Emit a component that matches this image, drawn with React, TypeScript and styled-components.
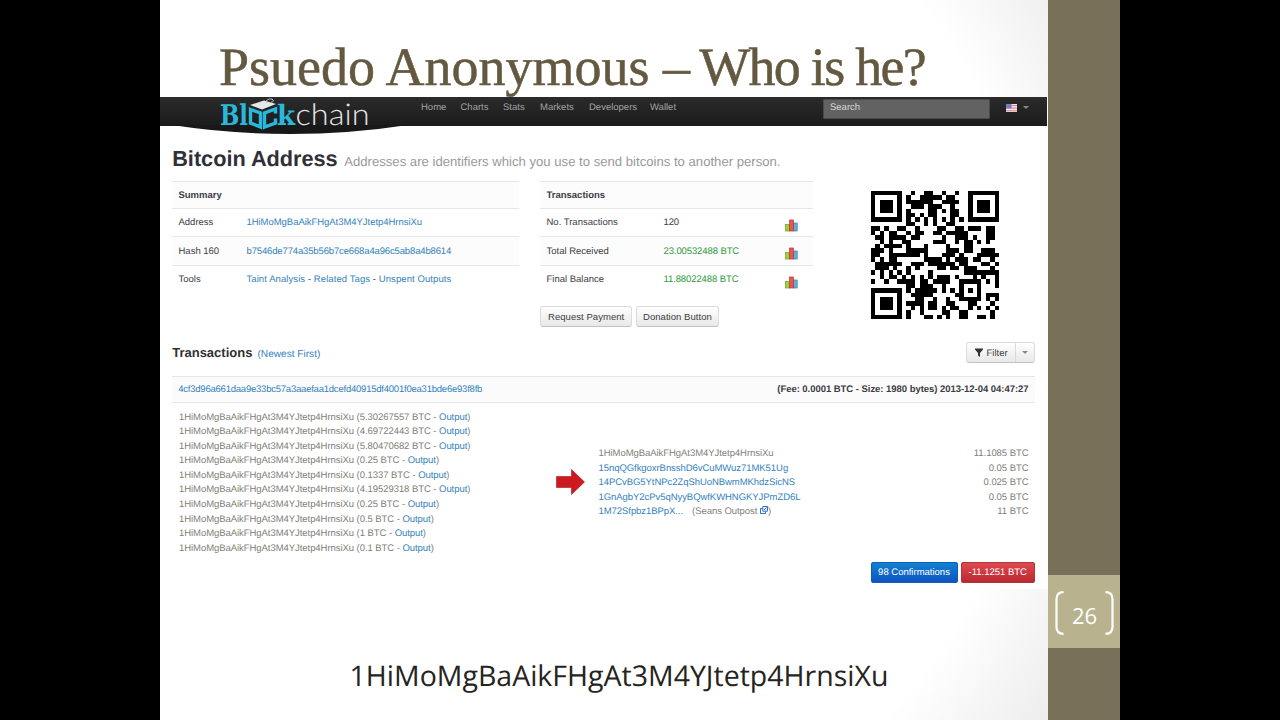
import React from "react";
import styled, { createGlobalStyle, css } from "styled-components";

const GlobalStyle = createGlobalStyle`
  * { box-sizing: border-box; }
  html, body { margin: 0; padding: 0; background: #000; }
  body { overflow: hidden; text-rendering: geometricPrecision; }
`;

const LINK = "#3582bd";
const ADDRESS = "1HiMoMgBaAikFHgAt3M4YJtetp4HrnsiXu";

/* ---------- QR code (version 3, level L, 29 x 29 modules) ---------- */

const QR_SIZE = 29;
const QR_DATA = 55;
const QR_MASK = 7;

function gfMul(x: number, y: number): number {
  let z = 0;
  for (let i = 7; i >= 0; i--) {
    z = (z << 1) ^ ((z >>> 7) * 0x11d);
    z ^= ((y >>> i) & 1) * x;
  }
  return z & 255;
}

function reedSolomon(data: number[], degree: number): number[] {
  const gen = new Array(degree).fill(0);
  gen[degree - 1] = 1;
  let root = 1;
  for (let i = 0; i < degree; i++) {
    for (let j = 0; j < degree; j++) {
      gen[j] = gfMul(gen[j], root);
      if (j + 1 < degree) gen[j] ^= gen[j + 1];
    }
    root = gfMul(root, 2);
  }
  const rem = new Array(degree).fill(0);
  for (const b of data) {
    const f = b ^ rem.shift();
    rem.push(0);
    gen.forEach((c, i) => (rem[i] ^= gfMul(c, f)));
  }
  return rem;
}

const isMasked = (x: number, y: number) => (((x + y) % 2) + ((x * y) % 3)) % 2 === 0;

function qrModules(text: string): boolean[][] {
  const bits: number[] = [];
  const put = (v: number, n: number) => {
    for (let i = n - 1; i >= 0; i--) bits.push((v >>> i) & 1);
  };
  put(4, 4);
  put(text.length, 8);
  for (const ch of text) put(ch.charCodeAt(0), 8);
  put(0, 4);
  const data: number[] = [];
  for (let i = 0; i < bits.length; i += 8) data.push(parseInt(bits.slice(i, i + 8).join(""), 2));
  for (let pad = 0xec; data.length < QR_DATA; pad ^= 0xec ^ 0x11) data.push(pad);
  const all = data.concat(reedSolomon(data, 70 - QR_DATA));

  const m = Array.from({ length: QR_SIZE }, () => new Array(QR_SIZE).fill(false));
  const fixed = Array.from({ length: QR_SIZE }, () => new Array(QR_SIZE).fill(false));
  const set = (x: number, y: number, v: boolean) => {
    if (x < 0 || y < 0 || x >= QR_SIZE || y >= QR_SIZE) return;
    m[y][x] = v;
    fixed[y][x] = true;
  };
  for (let i = 0; i < QR_SIZE; i++) {
    set(6, i, i % 2 === 0);
    set(i, 6, i % 2 === 0);
  }
  for (const [cx, cy] of [[3, 3], [QR_SIZE - 4, 3], [3, QR_SIZE - 4]]) {
    for (let dy = -4; dy <= 4; dy++)
      for (let dx = -4; dx <= 4; dx++) {
        const d = Math.max(Math.abs(dx), Math.abs(dy));
        set(cx + dx, cy + dy, d !== 2 && d !== 4);
      }
  }
  for (let dy = -2; dy <= 2; dy++)
    for (let dx = -2; dx <= 2; dx++) set(22 + dx, 22 + dy, Math.max(Math.abs(dx), Math.abs(dy)) !== 1);

  const info = (1 << 3) | QR_MASK;
  let rem = info;
  for (let i = 0; i < 10; i++) rem = (rem << 1) ^ ((rem >>> 9) * 0x537);
  const fmt = ((info << 10) | rem) ^ 0x5412;
  const f = (i: number) => ((fmt >>> i) & 1) === 1;
  for (let i = 0; i <= 5; i++) set(8, i, f(i));
  set(8, 7, f(6));
  set(8, 8, f(7));
  set(7, 8, f(8));
  for (let i = 9; i < 15; i++) set(14 - i, 8, f(i));
  for (let i = 0; i < 8; i++) set(QR_SIZE - 1 - i, 8, f(i));
  for (let i = 8; i < 15; i++) set(8, QR_SIZE - 15 + i, f(i));
  set(8, QR_SIZE - 8, true);

  let k = 0;
  for (let right = QR_SIZE - 1; right >= 1; right -= 2) {
    if (right === 6) right = 5;
    for (let v = 0; v < QR_SIZE; v++)
      for (let j = 0; j < 2; j++) {
        const x = right - j;
        const y = ((right + 1) & 2) === 0 ? QR_SIZE - 1 - v : v;
        if (fixed[y][x]) continue;
        const bit = k < all.length * 8 ? ((all[k >>> 3] >>> (7 - (k & 7))) & 1) === 1 : false;
        k++;
        m[y][x] = bit !== isMasked(x, y);
      }
  }
  return m;
}

const QrSvg = styled.svg`
  display: block;
  width: 128px;
  height: 128px;
  margin: 10px 0 0 58.5px;
`;

function QrCode({ text }: { text: string }) {
  const d = qrModules(text)
    .map((row, y) => row.map((on, x) => (on ? `M${x} ${y}h1v1h-1z` : "")).join(""))
    .join("");
  return (
    <QrSvg viewBox={`0 0 ${QR_SIZE} ${QR_SIZE}`} shapeRendering="crispEdges">
      <path d={d} fill="#000" />
    </QrSvg>
  );
}

/* ---------- slide frame ---------- */

const Stage = styled.div`
  width: 1280px;
  height: 720px;
  padding: 0 160px;
  display: flex;
  background: #000;
  overflow: hidden;
`;

const Slide = styled.main`
  width: 888px;
  height: 720px;
  display: flex;
  flex-direction: column;
  background: radial-gradient(circle at 330px 340px, #fff 545px, #eaeaea 695px);
`;

const Title = styled.h1`
  margin: 0;
  height: 97px;
  padding-left: 59px;
  font: 400 54px/134px "Liberation Serif", serif;
  color: #635941;
  -webkit-text-stroke: 0.5px #635941;
  white-space: nowrap;

  span { letter-spacing: -1.7px; }
`;

const Caption = styled.p`
  margin: 0;
  padding: 66.5px 0 0 189.5px;
  font: 400 28.5px/40px "Open Sans", sans-serif;
  color: #262420;
  white-space: nowrap;
`;

const Rail = styled.aside`
  width: 72px;
  height: 720px;
  padding-top: 575px;
  background: #787059;
`;

const PageBox = styled.div`
  height: 73px;
  padding: 2px 6px 0 7px;
  display: flex;
  align-items: center;
  justify-content: space-between;
  background: #b8b38e;
  color: #fff;
  font: 400 22px/30px "Open Sans", sans-serif;
`;

const PageNumber = styled.span`
  padding-top: 7px;
`;

const Bracket = styled.svg`
  width: 9px;
  height: 44px;
  fill: none;
  stroke: #fff;
  stroke-width: 2.2;
`;

/* ---------- web page ---------- */

const Page = styled.section`
  height: 492px;
  background: #fff;
  font: 400 9.5px/14.6px "Liberation Sans", Arial, sans-serif;
  color: #3c3c44;
  white-space: nowrap;
`;

const NavBar = styled.nav`
  position: relative;
  height: 28.5px;
  width: 887px;
  padding-left: 261px;
  display: flex;
  align-items: flex-start;
  background: linear-gradient(#2b2b2b, #1b1b1b);
`;

const NavSwoop = styled.svg`
  position: absolute;
  left: 0;
  top: 0;
  width: 260px;
  height: 40px;
`;

const NavItem = styled.a<{ $w: number }>`
  width: ${(p) => p.$w}px;
  line-height: 22px;
  color: #a3a3a3;
`;

const Search = styled.div`
  width: 167px;
  height: 19.5px;
  margin: 2px 0 0 133px;
  padding-left: 6px;
  border: 1px solid #4a4a4a;
  border-radius: 1px;
  background: #626262;
  color: #d8d8d8;
  line-height: 16.5px;
`;

const Flag = styled.svg`
  width: 11px;
  height: 8px;
  margin: 7px 6px 0 15.5px;
`;

const Caret = styled.span<{ $top?: number }>`
  width: 0;
  height: 0;
  margin-top: ${(p) => p.$top ?? 0}px;
  border: 3px solid transparent;
  border-top-color: #8a8a8a;
  border-bottom: 0;
`;

const Content = styled.div`
  padding: 0 13.5px 0 12.2px;
`;

const PageHeading = styled.h2`
  margin: 0;
  height: 55.5px;
  padding-top: 18px;
  font-size: 21.7px;
  line-height: 30px;
  color: #303036;

  small {
    margin-left: 6.5px;
    font-size: 13.13px;
    font-weight: 400;
    color: #999;
  }
`;

const Overview = styled.div`
  height: 161px;
  display: flex;
`;

const Column = styled.div<{ $w: number; $gap?: number }>`
  width: ${(p) => p.$w}px;
  margin-right: ${(p) => p.$gap ?? 0}px;
`;

const Row = styled.div<{ $head?: boolean; $shade?: boolean }>`
  display: flex;
  align-items: center;
  height: ${(p) => (p.$head ? 26.5 : 28.5)}px;
  padding: 3px 0 0 6.3px;
  border-top: 1px solid #e6e6e6;
  background: ${(p) => (p.$head || p.$shade ? "#fcfcfc" : "transparent")};
  font-weight: ${(p) => (p.$head ? 700 : 400)};
`;

const Cell = styled.span<{ $w?: number; $ls?: number; $color?: string }>`
  ${(p) => p.$w && css`width: ${p.$w}px;`}
  letter-spacing: ${(p) => p.$ls ?? 0}px;
  color: ${(p) => p.$color ?? "inherit"};
`;

const Link = styled.a<{ $ls?: number }>`
  color: ${LINK};
  ${(p) => p.$ls !== undefined && css`letter-spacing: ${p.$ls}px;`}
`;

const Tools = styled.span`
  letter-spacing: 0.08px;
`;

const Chart = styled.svg`
  width: 13px;
  height: 13px;
  margin-top: 3px;
`;

const ButtonRow = styled.div`
  display: flex;
  gap: 3.5px;
  margin-top: 13px;
`;

const Button = styled.button<{ $w: number }>`
  width: ${(p) => p.$w}px;
  height: 20.5px;
  padding: 1px 0 0;
  border: 1px solid #dcdcdc;
  border-bottom-color: #c2c2c2;
  border-radius: 3px;
  background: linear-gradient(#fff, #e8e8e8);
  color: #3c3c44;
  font: inherit;
  letter-spacing: 0.05px;
  line-height: 18px;
`;

const ListHead = styled.div`
  height: 34px;
  display: flex;
  align-items: flex-start;
  justify-content: space-between;
`;

const ListTitle = styled.h3`
  margin: 0;
  font-size: 13px;
  line-height: 21px;
  color: #303036;

  a {
    margin-left: 1.5px;
    font-size: 10.1px;
    font-weight: 400;
  }
`;

const FilterButton = styled.div`
  width: 69px;
  height: 21px;
  display: flex;
  align-items: center;
  border: 1px solid #dcdcdc;
  border-bottom-color: #c2c2c2;
  border-radius: 3px;
  background: linear-gradient(#fff, #e8e8e8);
`;

const FilterMain = styled.span`
  width: 49px;
  height: 19px;
  padding: 3px 0 0 8px;
  display: flex;
  align-items: center;
  gap: 4px;
  margin-right: 6px;
  border-right: 1px solid #d8d8d8;

  svg { margin-bottom: 4px; }
`;

const TxBar = styled.div`
  height: 27px;
  padding: 2px 6px 0;
  display: flex;
  align-items: center;
  justify-content: space-between;
  border: 1px solid #e6e6e6;
  border-width: 1px 0;
  background: #fbfbfb;

  b { letter-spacing: -0.04px; }
`;

const TxBody = styled.div`
  height: 159px;
  padding: 7.5px 6px 0 6.8px;
  display: flex;
  letter-spacing: -0.055px;
  color: #7f7f78;
`;

const Inputs = styled.div`
  width: 377.5px;
`;

const Arrow = styled.svg`
  width: 29px;
  height: 26px;
  margin: 58px 13px 0 0;
`;

const Outputs = styled.div`
  flex: 1;
  padding-top: 36.5px;
`;

const OutputRow = styled.div`
  display: flex;
  justify-content: space-between;
`;

const TagNote = styled.span`
  margin-left: 9px;
`;

const TxFoot = styled.div`
  display: flex;
  justify-content: flex-end;
  gap: 3.5px;
`;

const Pill = styled.span<{ $w: number; $tone: "blue" | "red" }>`
  width: ${(p) => p.$w}px;
  height: 20.5px;
  border-radius: 3px;
  text-align: center;
  line-height: 22px;
  color: #fff;
  background: ${(p) =>
    p.$tone === "blue" ? "linear-gradient(#1185d0, #1050c0)" : "linear-gradient(#e04a50, #b8282f)"};
  box-shadow: inset 0 0 0 1px ${(p) => (p.$tone === "blue" ? "#0c5fb8" : "#b8323c")};
`;

/* ---------- parts ---------- */

function Logo() {
  return (
    <NavSwoop viewBox="0 0 260 40">
      <path d="M12 28 Q70 37 130 37 Q190 37 248 28Z" fill="#181818" />
      <text x="60" y="28" fontFamily="DejaVu Serif" fontWeight="700" fontSize="28.500" fill="#29b8dc" textLength="28" lengthAdjust="spacingAndGlyphs">Bl</text>
      <text x="117" y="28" fontFamily="DejaVu Serif" fontWeight="700" fontSize="28" fill="#29b8dc" textLength="18" lengthAdjust="spacingAndGlyphs">k</text>
      <text x="135.500" y="28" fontFamily="Lato" fontWeight="300" fontSize="30" fill="#e4e4e4" textLength="74" lengthAdjust="spacingAndGlyphs">chain</text>
      <path d="M90 8 L104 3.500 L116 7 L102 12.500Z" fill="#e6e8ea" />
      <path d="M107 6 q-2 -3 2 -4 q4 -1 4.500 2 q-1 1.500 -2.500 1" fill="none" stroke="#b8bcc0" strokeWidth="1" />
      <path d="M90.500 12.500 L100.500 16 V30 L90.500 26Z" fill="none" stroke="#29b8dc" strokeWidth="3.400" />
      <path d="M115.500 16.500 V12 L104.500 16 V30 L115.500 26 V21.500" fill="none" stroke="#29b8dc" strokeWidth="3.400" />
    </NavSwoop>
  );
}

function ChartIcon() {
  return (
    <Chart viewBox="0 0 13 13">
      <rect x="0.500" y="5.500" width="4" height="6.500" fill="#9fd03c" stroke="#6f9f28" strokeWidth="0.700" />
      <rect x="8.500" y="4" width="3.700" height="8" fill="#5cb0e4" stroke="#3d7fb4" strokeWidth="0.700" />
      <rect x="4.500" y="1" width="4" height="11" fill="#e8564c" stroke="#b83830" strokeWidth="0.700" />
    </Chart>
  );
}

const NAV: [string, number][] = [
  ["Home", 39.5], ["Charts", 42.5], ["Stats", 37], ["Markets", 49], ["Developers", 61], ["Wallet", 40],
];

const INPUTS = ["5.30267557", "4.69722443", "5.80470682", "0.25", "0.1337", "4.19529318", "0.25", "0.5", "1", "0.1"];

const OUTPUTS: [string, string][] = [
  ["15nqQGfkgoxrBnsshD6vCuMWuz71MK51Ug", "0.05 BTC"],
  ["14PCvBG5YtNPc2ZqShUoNBwmMKhdzSicNS", "0.025 BTC"],
  ["1GnAgbY2cPv5qNyyBQwfKWHNGKYJPmZD6L", "0.05 BTC"],
];

const STATS: [string, string, string?][] = [
  ["No. Transactions", "120"],
  ["Total Received", "23.00532488 BTC", "#2f9a3c"],
  ["Final Balance", "11.88022488 BTC", "#2f9a3c"],
];

export default function App() {
  return (
    <>
      <GlobalStyle />
      <Stage>
        <Slide>
          <Title>
            Psuedo Anonymous <span>– Who is he?</span>
          </Title>
          <Page>
            <NavBar>
              <Logo />
              {NAV.map(([label, w]) => (
                <NavItem key={label} $w={w}>{label}</NavItem>
              ))}
              <Search>Search</Search>
              <Flag viewBox="0 0 11 8">
                <rect width="11" height="8" fill="#f6e4e6" />
                <path d="M0 1.500h11M0 4h11M0 6.800h11" stroke="#dc7f88" strokeWidth="1" />
                <rect width="5.500" height="4.500" fill="#7480c4" />
              </Flag>
              <Caret $top={9} />
            </NavBar>
            <Content>
              <PageHeading>
                Bitcoin Address
                <small>Addresses are identifiers which you use to send bitcoins to another person.</small>
              </PageHeading>
              <Overview>
                <Column $w={346.5} $gap={21.5}>
                  <Row $head>Summary</Row>
                  <Row>
                    <Cell $w={68}>Address</Cell>
                    <Link $ls={-0.04}>{ADDRESS}</Link>
                  </Row>
                  <Row $shade>
                    <Cell $w={68}>Hash 160</Cell>
                    <Link $ls={-0.14}>b7546de774a35b56b7ce668a4a96c5ab8a4b8614</Link>
                  </Row>
                  <Row>
                    <Cell $w={68}>Tools</Cell>
                    <Tools>
                      <Link>Taint Analysis</Link> - <Link>Related Tags</Link> - <Link>Unspent Outputs</Link>
                    </Tools>
                  </Row>
                </Column>
                <Column $w={272.5}>
                  <Row $head>Transactions</Row>
                  {STATS.map(([label, value, color], i) => (
                    <Row key={label} $shade={i === 1}>
                      <Cell $w={117}>{label}</Cell>
                      <Cell $w={121.5} $ls={-0.1} $color={color}>{value}</Cell>
                      <ChartIcon />
                    </Row>
                  ))}
                  <ButtonRow>
                    <Button $w={92}>Request Payment</Button>
                    <Button $w={83.5}>Donation Button</Button>
                  </ButtonRow>
                </Column>
                <QrCode text={ADDRESS} />
              </Overview>
              <ListHead>
                <ListTitle>
                  Transactions <Link>(Newest First)</Link>
                </ListTitle>
                <FilterButton>
                  <FilterMain>
                    <svg width="8" height="9" viewBox="0 0 8 9">
                      <path d="M0 0.500H8V1.500L5 5V9L3 7.500V5L0 1.500Z" fill="#333" />
                    </svg>
                    Filter
                  </FilterMain>
                  <Caret />
                </FilterButton>
              </ListHead>
              <TxBar>
                <Link $ls={-0.22}>4cf3d96a661daa9e33bc57a3aaefaa1dcefd40915df4001f0ea31bde6e93f8fb</Link>
                <b>(Fee: 0.0001 BTC - Size: 1980 bytes) 2013-12-04 04:47:27</b>
              </TxBar>
              <TxBody>
                <Inputs>
                  {INPUTS.map((amount, i) => (
                    <div key={i}>
                      {ADDRESS} ({amount} BTC - <Link>Output</Link>)
                    </div>
                  ))}
                </Inputs>
                <Arrow viewBox="0 0 29 26">
                  <path d="M0.500 7.500H15.500V0.500L28.500 13L15.500 25.500V18.500H0.500Z" fill="#cb1a20" stroke="#a8141a" strokeWidth="0.600" />
                </Arrow>
                <Outputs>
                  <OutputRow>
                    <span>{ADDRESS}</span>
                    <span>11.1085 BTC</span>
                  </OutputRow>
                  {OUTPUTS.map(([address, amount]) => (
                    <OutputRow key={address}>
                      <Link>{address}</Link>
                      <span>{amount}</span>
                    </OutputRow>
                  ))}
                  <OutputRow>
                    <span>
                      <Link>1M72Sfpbz1BPpX...</Link>
                      <TagNote>
                        (Seans Outpost{" "}
                        <svg width="8" height="8" viewBox="0 0 8 8" fill="none" stroke="#2a6fd0">
                          <path d="M2.500 2.500H0.500V7.500H5.500V5.500M2.800 0.500H7.500V5.200H2.800ZM4 4L6.500 1.500" />
                        </svg>
                        )
                      </TagNote>
                    </span>
                    <span>11 BTC</span>
                  </OutputRow>
                </Outputs>
              </TxBody>
              <TxFoot>
                <Pill $w={87} $tone="blue">98 Confirmations</Pill>
                <Pill $w={73.5} $tone="red">-11.1251 BTC</Pill>
              </TxFoot>
            </Content>
          </Page>
          <Caption>{ADDRESS}</Caption>
        </Slide>
        <Rail>
          <PageBox>
            <Bracket viewBox="0 0 9 44">
              <path d="M8.500 1.200Q1.500 1.200 1.500 8V36Q1.500 42.800 8.500 42.800" />
            </Bracket>
            <PageNumber>26</PageNumber>
            <Bracket viewBox="0 0 9 44">
              <path d="M0.500 1.200Q7.500 1.200 7.500 8V36Q7.500 42.800 0.500 42.800" />
            </Bracket>
          </PageBox>
        </Rail>
      </Stage>
    </>
  );
}
